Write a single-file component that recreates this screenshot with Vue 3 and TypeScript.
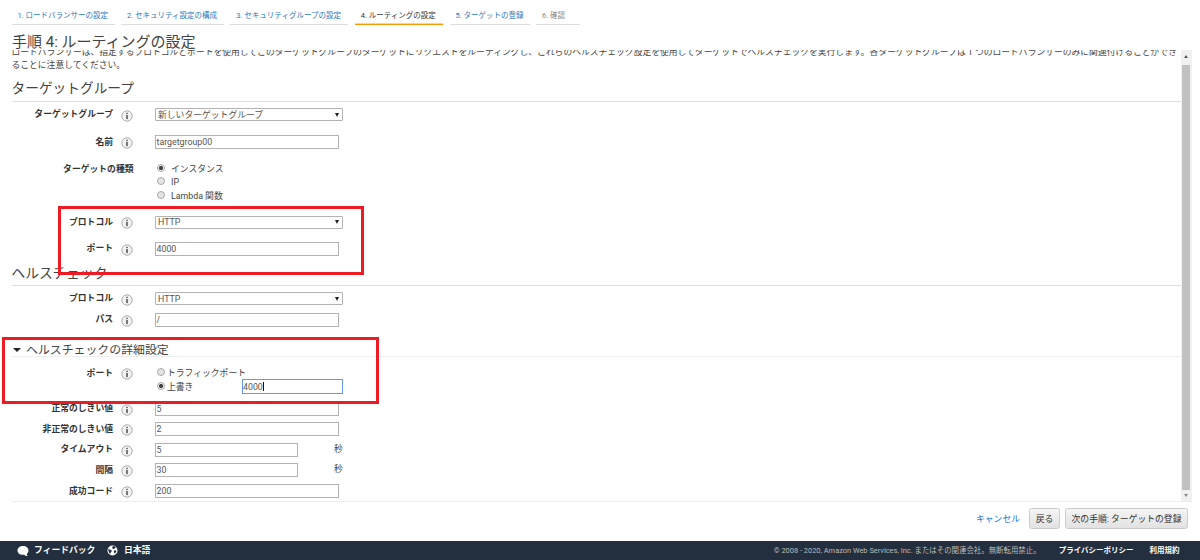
<script setup lang="ts">
interface Tab { label: string; width: number; state: 'link' | 'active' | 'idle' }
interface Field {
  label: string
  kind: 'select' | 'text' | 'short'
  value: string
  size: string
}

const tabs: Tab[] = [
  { label: '1. ロードバランサーの設定', width: 103, state: 'link' },
  { label: '2. セキュリティ設定の構成', width: 103, state: 'link' },
  { label: '3. セキュリティグループの設定', width: 118, state: 'link' },
  { label: '4. ルーティングの設定', width: 88.5, state: 'active' },
  { label: '5. ターゲットの登録', width: 80, state: 'link' },
  { label: '6. 確認', width: 44, state: 'idle' },
]

const groupFields: Field[] = [
  { label: 'ターゲットグループ', kind: 'select', value: '新しいターゲットグループ', size: 'h25' },
  { label: '名前', kind: 'text', value: 'targetgroup00', size: 'h29' },
]
const protocolFields: Field[] = [
  { label: 'プロトコル', kind: 'select', value: 'HTTP', size: 'h27' },
  { label: 'ポート', kind: 'text', value: '4000', size: 'h27' },
]
const healthFields: Field[] = [
  { label: 'プロトコル', kind: 'select', value: 'HTTP', size: 'h21' },
  { label: 'パス', kind: 'text', value: '/', size: 'h21' },
]
const advancedFields: Field[] = [
  { label: '正常のしきい値', kind: 'text', value: '5', size: 'h20' },
  { label: '非正常のしきい値', kind: 'text', value: '2', size: 'h20' },
  { label: 'タイムアウト', kind: 'short', value: '5', size: 'h20' },
  { label: '間隔', kind: 'short', value: '30', size: 'h20' },
  { label: '成功コード', kind: 'text', value: '200', size: 'h20' },
]
const sections = { groupFields, protocolFields, healthFields, advancedFields }
const kinds = ['インスタンス', 'IP', 'Lambda 関数']
const order = ['groupFields', 'kinds', 'protocolFields', 'healthTitle', 'healthFields', 'advanced', 'advancedFields'] as const
</script>

<template>
  <div class="page">
    <nav class="tabs">
      <span v-for="t in tabs" :key="t.label" class="tab" :class="t.state" :style="{ width: t.width + 'px' }">{{ t.label }}</span>
    </nav>
    <h1>手順 4: ルーティングの設定</h1>

    <div class="scroller">
      <main class="content">
        <p class="intro">
          <span class="line">ロードバランサーは、指定するプロトコルとポートを使用してこのターゲットグループのターゲットにリクエストをルーティングし、これらのヘルスチェック設定を使用してターゲットでヘルスチェックを実行します。各ターゲットグループは 1 つのロードバランサーのみに関連付けることができ</span>
          <span class="line">ることに注意してください。</span>
        </p>
        <h2 class="first">ターゲットグループ</h2>

        <template v-for="part in order" :key="part">
          <div v-if="part === 'kinds'" class="row kinds">
            <span class="label no-info">ターゲットの種類</span>
            <div class="radios">
              <span v-for="(k, i) in kinds" :key="k" class="radio"><i class="dot" :class="{ on: i === 0 }"></i>{{ k }}</span>
            </div>
          </div>

          <h2 v-else-if="part === 'healthTitle'" class="second">ヘルスチェック</h2>

          <template v-else-if="part === 'advanced'">
            <h3><i class="caret"></i>ヘルスチェックの詳細設定</h3>
            <div class="row ports">
              <span class="label">ポート</span>
              <svg class="info" viewBox="0 0 12 12"><circle cx="6" cy="6" r="5.2" /><rect x="5.3" y="5" width="1.4" height="4.1" /><rect x="5.3" y="2.8" width="1.4" height="1.3" /></svg>
              <div class="radios tight">
                <span class="radio"><i class="dot"></i>トラフィックポート</span>
                <span class="radio"><i class="dot on"></i><span class="override">上書き</span><span class="box focus">4000<i class="cursor"></i></span></span>
              </div>
            </div>
          </template>

          <template v-else>
            <div v-for="f in sections[part]" :key="f.label" class="row" :class="f.size">
              <span class="label">{{ f.label }}</span>
              <svg class="info" viewBox="0 0 12 12"><circle cx="6" cy="6" r="5.2" /><rect x="5.3" y="5" width="1.4" height="4.1" /><rect x="5.3" y="2.8" width="1.4" height="1.3" /></svg>
              <span class="box" :class="f.kind">{{ f.value }}<i v-if="f.kind === 'select'" class="arrow"></i></span>
              <span v-if="f.kind === 'short'" class="unit">秒</span>
            </div>
          </template>
        </template>
      </main>
      <div class="bar"><i class="up"></i><i class="thumb"></i><i class="down"></i></div>
    </div>

    <div class="actions">
      <a class="cancel">キャンセル</a>
      <span class="btn back">戻る</span>
      <span class="btn next">次の手順: ターゲットの登録</span>
    </div>

    <footer>
      <svg class="bubble" viewBox="0 0 12 12"><path d="M6 1C2.800 1 .5 2.900 .5 5.400S2.800 9.800 6 9.800l1.100-.1c.9.8 2 1.300 3.700 1.300-.7-.7-1-1.300-1.100-2.100 1.100-.8 1.800-2 1.800-3.500C11.500 2.900 9.200 1 6 1z" /></svg>
      <b class="feedback">フィードバック</b>
      <svg class="globe" viewBox="0 0 12 12"><circle cx="6" cy="6" r="5.5" fill="#fff" /><path fill="#232f3e" d="M6.200 1.300 8.200 1.400l1.600 1.300-1.400.6-.6 1.300-1.500-.4-.6-1.200zM1.200 4.400l1.900.6 1.800.6.3 1.200-1.200 1.300-.2 1.700L2.500 8.600 1.700 6.500zM7.300 6.300l1.900-.5 1.100.9-1.100 1.900-1.300.7-.2-1.500z" /></svg>
      <b>日本語</b>
      <span class="copy">© 2008 - 2020, Amazon Web Services, Inc. またはその関連会社。無断転用禁止。</span>
      <b class="legal privacy">プライバシーポリシー</b>
      <b class="legal">利用規約</b>
    </footer>

    <div class="mark mark-a"></div>
    <div class="mark mark-b"></div>
  </div>
</template>

<style>
body { margin: 0; background: #fff; }
</style>

<style scoped>
.page {
  position: relative;
  width: 1200px;
  height: 560px;
  overflow: hidden;
  display: flex;
  flex-direction: column;
  box-sizing: border-box;
  font-family: Roboto, "Noto Sans CJK JP", sans-serif;
  font-size: 8.8px;
  color: #444;
  white-space: nowrap;
}
.page * { box-sizing: border-box; }
i { font-style: normal; flex: none; }
.tabs { display: flex; gap: 6.4px; padding-left: 11.5px; height: 25px; flex: none; }
.tab { flex: none; height: 25px; padding: 4px 0 0 6px; line-height: 23px; font-size: 7.5px; border-bottom: 1px solid #ddd; }
.link { color: #2a78bd; }
.active { color: #333; border-bottom: 1px solid #f90; box-shadow: inset 0 -1px #ffd493; }
.idle { color: #888; }
h1, h2, h3, p { margin: 0; font-weight: 400; }
h1 { height: 25px; flex: none; padding-left: 12px; font-size: 15px; line-height: 34px; color: #444; }
.scroller { flex: none; display: flex; height: 452px; margin-left: 11.5px; width: 1180px; overflow: hidden; border-bottom: 1px solid #eee; }
.content { width: 1169.5px; flex: none; }
.intro { margin-top: -4px; height: 26px; }
.line { display: block; height: 13px; line-height: 13px; font-size: 8.795px; }
h2 { font-size: 13.7px; color: #444; border-bottom: 1px solid #ddd; }
.first { height: 29.8px; line-height: 33px; }
.second { height: 24px; line-height: 22px; }
.row { display: flex; align-items: center; }
.h25 { height: 26px; }
.h29 { height: 28.5px; }
.h27 { height: 26.8px; }
.h21 { height: 21px; }
.h20 { height: 20.6px; }
.second + .row { margin-top: 2px; }
.label { width: 101.5px; flex: none; text-align: right; font-weight: 700; color: #333; line-height: 13px; }
.no-info { width: 122px; margin-right: 21.5px; }
.info { width: 12px; height: 12px; flex: none; margin: 2px 22px 0 8px; }
.info circle { fill: #f2f2f2; stroke: #999; stroke-width: .8; }
.info rect { fill: #444; }
.box { display: flex; align-items: center; flex: none; width: 184px; height: 14px; border: 1px solid #b3b3b3; padding-left: .5px; line-height: 12px; background: #fff; color: #555; }
.select { width: 188px; height: 13px; padding: 0 3.5px 0 2px; justify-content: space-between; border-radius: 1px; }
.short { width: 143px; }
.unit { margin-left: 36px; line-height: 12px; padding-bottom: 2px; }
.arrow { width: 0; height: 0; border: 2px solid transparent; border-top: 4px solid #222; border-bottom: 0; }
.kinds { height: 52.5px; padding-top: 5.5px; align-items: flex-start; }
.kinds .label { line-height: 14px; }
.radios { display: flex; flex-direction: column; padding-left: 1.5px; }
.radio { display: flex; align-items: center; height: 13.7px; line-height: 14px; }
.dot { width: 8px; height: 8px; margin: -2px 6.5px 0 0; border: 1px solid #aaa; border-radius: 50%; background: #e4e4e4; }
.dot.on { background: radial-gradient(circle, #444 0 1.8px, #eee 2.3px); }
.tight .dot { margin-right: 2.5px; }
h3 { display: flex; align-items: center; height: 27px; padding-top: 13px; font-size: 11.9px; line-height: 14px; border-bottom: 1px solid #eee; }
.caret { width: 0; height: 0; margin: 0 5px 0 1.5px; border: 4px solid transparent; border-top: 4.5px solid #222; border-bottom: 0; }
.ports { height: 41px; padding-top: 9px; align-items: flex-start; }
.ports .label { line-height: 14px; }
.ports .info { margin-top: 2px; }
.override { width: 74.5px; }
.box.focus { width: 101px; height: 15px; border: 1px solid #6299ee; }
.cursor { width: 1px; height: 9px; background: #111; }
.bar { width: 10.5px; flex: none; display: flex; flex-direction: column; align-items: center; background: #f1f1f1; }
.up { width: 0; height: 0; margin: 5px 0 7px; border: 2.5px solid transparent; border-top: 0; border-bottom: 3px solid #555; }
.thumb { width: 8px; height: 425px; background: #c1c1c1; }
.down { width: 0; height: 0; margin-top: 4px; border: 2.5px solid transparent; border-bottom: 0; border-top: 3px solid #888; }
.actions { height: 39px; flex: none; display: flex; justify-content: flex-end; align-items: flex-start; padding: 6px 12px 0 0; line-height: 22px; }
.cancel { color: #1a73d9; margin-right: 9px; }
.btn { height: 21px; border: 1px solid #ccc; border-radius: 2.5px; background: linear-gradient(#f5f5f5, #e2e2e2); text-align: center; line-height: 20px; color: #333; }
.back { width: 31px; margin-right: 5px; }
.next { width: 123px; }
footer { height: 19px; flex: none; display: flex; align-items: center; padding: 0 20.5px 0 16.5px; background: #232f3e; color: #fff; line-height: 19px; }
.bubble { width: 12px; height: 12px; fill: #fff; margin-right: 5.5px; }
.feedback { margin-right: 12px; }
.globe { width: 11px; height: 11px; margin-right: 5.5px; }
.copy { margin-left: auto; margin-right: 18px; font-size: 7.43px; color: #bbb; }
.legal { font-size: 7.5px; }
.privacy { margin-right: 16px; }
.mark { position: absolute; border: 3px solid #ed1c24; }
.mark-a { left: 58px; top: 206px; width: 306px; height: 69px; }
.mark-b { left: 2px; top: 337px; width: 377px; height: 67px; }
</style>
